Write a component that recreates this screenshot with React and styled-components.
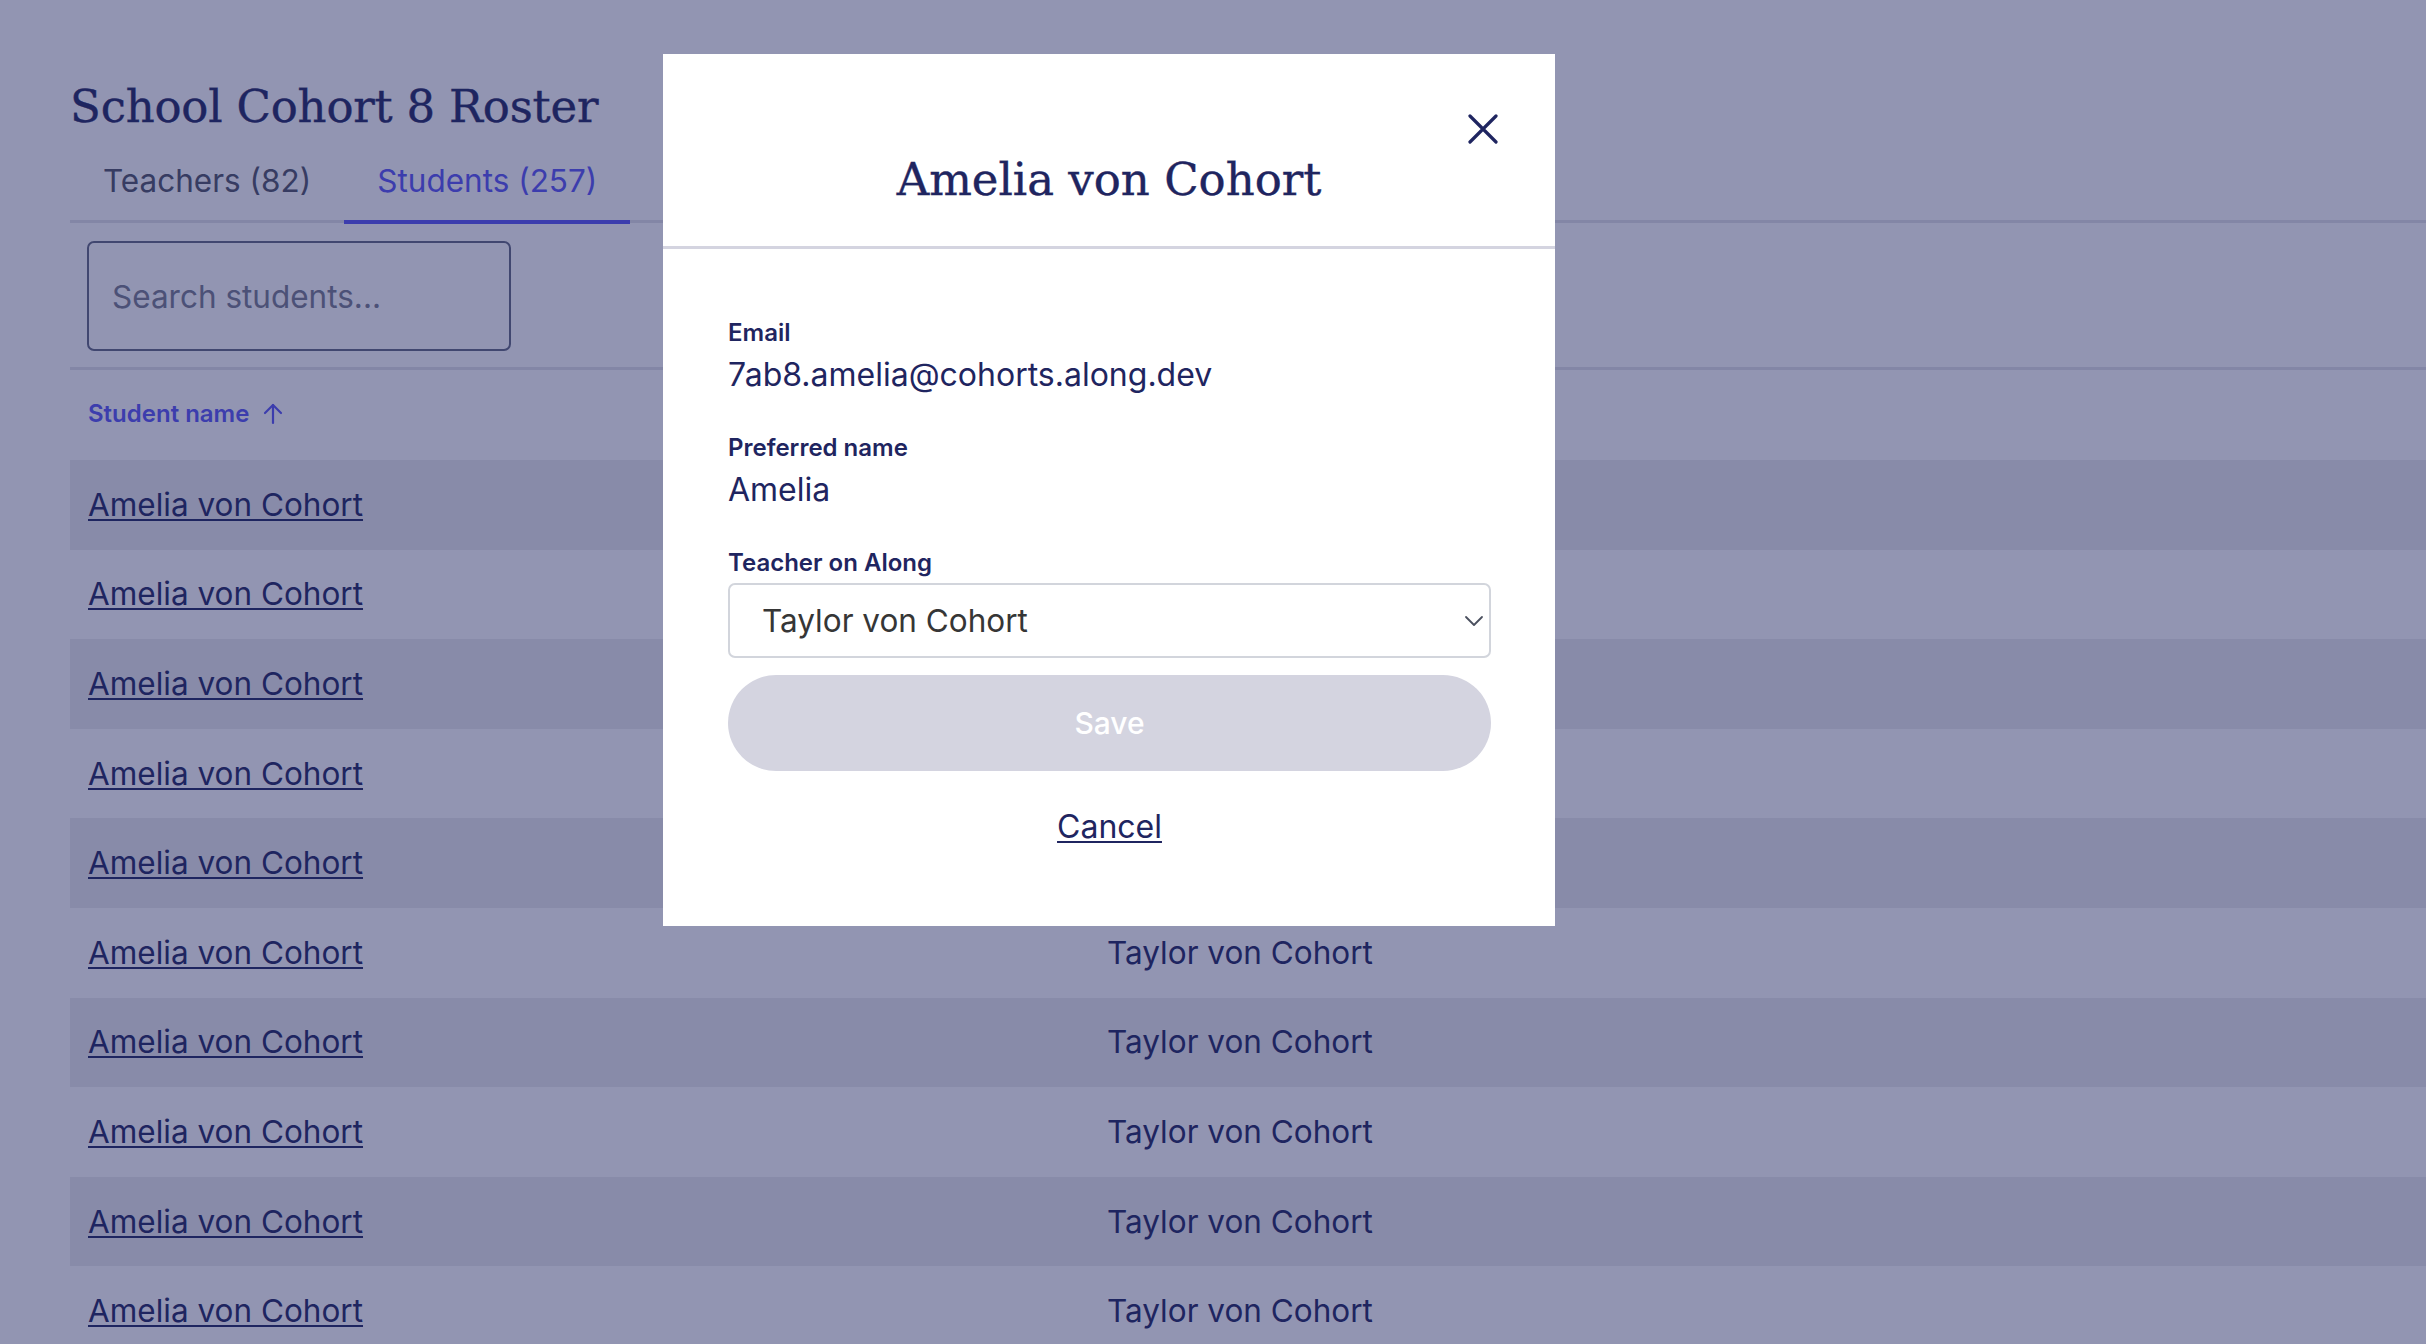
import React from "react";
import styled, { createGlobalStyle } from "styled-components";

const GlobalStyle = createGlobalStyle`
  html, body {
    margin: 0;
    padding: 0;
    background: #ffffff;
    font-family: Inter, "Liberation Sans", Arial, sans-serif;
    color: #1f2560;
    overflow: hidden;
  }
  * { box-sizing: border-box; }
`;

const Page = styled.main`
  padding: 80px 0 0 70px;
  background: #ffffff;
`;

const Title = styled.h1`
  margin: 0;
  font-family: "DejaVu Serif", "Liberation Serif", serif;
  font-weight: 400;
  font-size: 45px;
  line-height: 54px;
  color: #1f2560;
  letter-spacing: -0.2px;
  -webkit-text-stroke: 0.4px #1f2560;
`;

const TabList = styled.nav`
  display: flex;
  box-shadow: inset 0 -3px 0 #e2e2e8;
`;

const Tab = styled.button`
  border: 0;
  background: none;
  font-family: Inter, "Liberation Sans", sans-serif;
  font-size: 31.5px;
  line-height: 40px;
  padding: 27px 33px 19px;
  border-bottom: 4px solid ${(p) => (p.$active ? "#5854f6" : "transparent")};
  margin-bottom: -1px;
  color: ${(p) => (p.$active ? "#5854f6" : "#4e5263")};
  cursor: pointer;
`;

const Toolbar = styled.div`
  padding: 18px 17px 16px;
  border-bottom: 3px solid #e2e2e8;
`;

const SearchInput = styled.input`
  display: block;
  width: 424px;
  height: 110px;
  border: 2px solid #61677f;
  border-radius: 7px;
  padding: 0 23px;
  font-family: Inter, "Liberation Sans", sans-serif;
  font-size: 31.5px;
  color: #1f2560;
  background: transparent;
  &::placeholder { color: #777b8c; }
`;

const Table = styled.div`
  display: grid;
  grid-template-columns: 1019px 1fr;
`;

const HeaderCell = styled.div`
  display: flex;
  align-items: center;
  gap: 14px;
  padding: 29px 18px 31px;
  height: 90px;
  font-size: 24px;
  line-height: 30px;
  font-weight: 600;
  color: ${(p) => (p.$active ? "#5854f6" : "#1f2560")};
`;

const Cell = styled.div`
  padding: 24.8px 18px;
  font-size: 31.5px;
  line-height: 40px;
  background: ${(p) => (p.$striped ? "#ececee" : "transparent")};
  color: #1f2560;
  white-space: nowrap;
`;

const NameLink = styled.a`
  color: #1f2560;
  text-decoration: underline;
  text-decoration-thickness: 2px;
  text-underline-offset: 3px;
`;

const Overlay = styled.div`
  position: fixed;
  inset: 0;
  background: rgba(31, 37, 96, 0.487);
  padding: 54px 0 0 663px;
`;

const Modal = styled.div`
  position: relative;
  width: 892px;
  height: 872px;
  background: #ffffff;
  display: flex;
  flex-direction: column;
`;

const ModalHeader = styled.header`
  padding: 99px 0 39px;
  border-bottom: 3px solid #d4d4e0;
  text-align: center;
`;

const ModalTitle = styled.h2`
  margin: 0;
  font-family: "DejaVu Serif", "Liberation Serif", serif;
  font-weight: 400;
  font-size: 45px;
  line-height: 54px;
  color: #1f2560;
  -webkit-text-stroke: 0.4px #1f2560;
`;

const CloseButton = styled.button`
  position: absolute;
  top: 59px;
  right: 56px;
  width: 32px;
  height: 32px;
  padding: 0;
  border: 0;
  background: none;
  display: flex;
  align-items: center;
  justify-content: center;
  color: #1f2560;
  cursor: pointer;
`;

const ModalBody = styled.div`
  padding: 69px 64px 0 65px;
  display: flex;
  flex-direction: column;
`;

const Label = styled.div`
  font-size: 24px;
  line-height: 30px;
  font-weight: 600;
  color: #1f2560;
  margin-top: ${(p) => p.$mt || 0}px;
`;

const Value = styled.div`
  font-size: 32px;
  line-height: 40px;
  color: #1f2560;
  margin-top: 7px;
`;

const SelectWrap = styled.div`
  position: relative;
  margin-top: 5px;
`;

const Select = styled.select`
  display: block;
  width: 100%;
  height: 75px;
  appearance: none;
  -webkit-appearance: none;
  border: 2px solid #d2d5dc;
  border-radius: 7px;
  background: #ffffff;
  padding: 0 40px 0 32px;
  font-family: Inter, "Liberation Sans", sans-serif;
  font-size: 31.5px;
  color: #363636;
`;

const Chevron = styled.svg`
  position: absolute;
  right: 7px;
  top: 32px;
  pointer-events: none;
`;

const SaveButton = styled.button`
  margin-top: 17px;
  height: 96px;
  border: 0;
  border-radius: 48px;
  background: #d4d4e0;
  color: #ffffff;
  font-family: Inter, "Liberation Sans", sans-serif;
  font-size: 30px;
  font-weight: 500;
`;

const CancelLink = styled.a`
  align-self: center;
  margin-top: 36px;
  font-size: 32px;
  line-height: 40px;
  color: #1f2560;
  text-decoration: underline;
  text-decoration-thickness: 2px;
  text-underline-offset: 3px;
  cursor: pointer;
`;

const rows = Array.from({ length: 10 }, () => ({
  student: "Amelia von Cohort",
  teacher: "Taylor von Cohort",
}));

export default function App() {
  return (
    <>
      <GlobalStyle />
      <Page>
        <Title>School Cohort 8 Roster</Title>
        <TabList>
          <Tab>Teachers (82)</Tab>
          <Tab $active>Students (257)</Tab>
        </TabList>
        <Toolbar>
          <SearchInput placeholder="Search students..." />
        </Toolbar>
        <Table>
          <HeaderCell $active>
            Student name
            <svg width="20" height="22" viewBox="0 0 20 22" fill="none" stroke="currentColor" strokeWidth="2.2" strokeLinecap="round" strokeLinejoin="round">
              <path d="M10 20V2" />
              <path d="M2 10l8-8 8 8" />
            </svg>
          </HeaderCell>
          <HeaderCell>Teacher on Along</HeaderCell>
          {rows.map((r, i) => (
            <React.Fragment key={i}>
              <Cell $striped={i % 2 === 0}>
                <NameLink href="#">{r.student}</NameLink>
              </Cell>
              <Cell $striped={i % 2 === 0}>{r.teacher}</Cell>
            </React.Fragment>
          ))}
        </Table>
      </Page>
      <Overlay>
        <Modal role="dialog">
          <ModalHeader>
            <ModalTitle>Amelia von Cohort</ModalTitle>
          </ModalHeader>
          <CloseButton aria-label="Close">
            <svg width="30" height="30" viewBox="0 0 30 30" fill="none" stroke="currentColor" strokeWidth="3.2" strokeLinecap="round">
              <path d="M2 2l26 26M28 2L2 28" />
            </svg>
          </CloseButton>
          <ModalBody>
            <Label>Email</Label>
            <Value>7ab8.amelia@cohorts.along.dev</Value>
            <Label $mt={38}>Preferred name</Label>
            <Value>Amelia</Value>
            <Label $mt={38}>Teacher on Along</Label>
            <SelectWrap>
              <Select defaultValue="taylor">
                <option value="taylor">Taylor von Cohort</option>
              </Select>
              <Chevron width="20" height="12" viewBox="0 0 20 12" fill="none" stroke="#4a4f5e" strokeWidth="1.8" strokeLinecap="round" strokeLinejoin="round">
                <path d="M2 2l8 8 8-8" />
              </Chevron>
            </SelectWrap>
            <SaveButton disabled>Save</SaveButton>
            <CancelLink>Cancel</CancelLink>
          </ModalBody>
        </Modal>
      </Overlay>
    </>
  );
}
